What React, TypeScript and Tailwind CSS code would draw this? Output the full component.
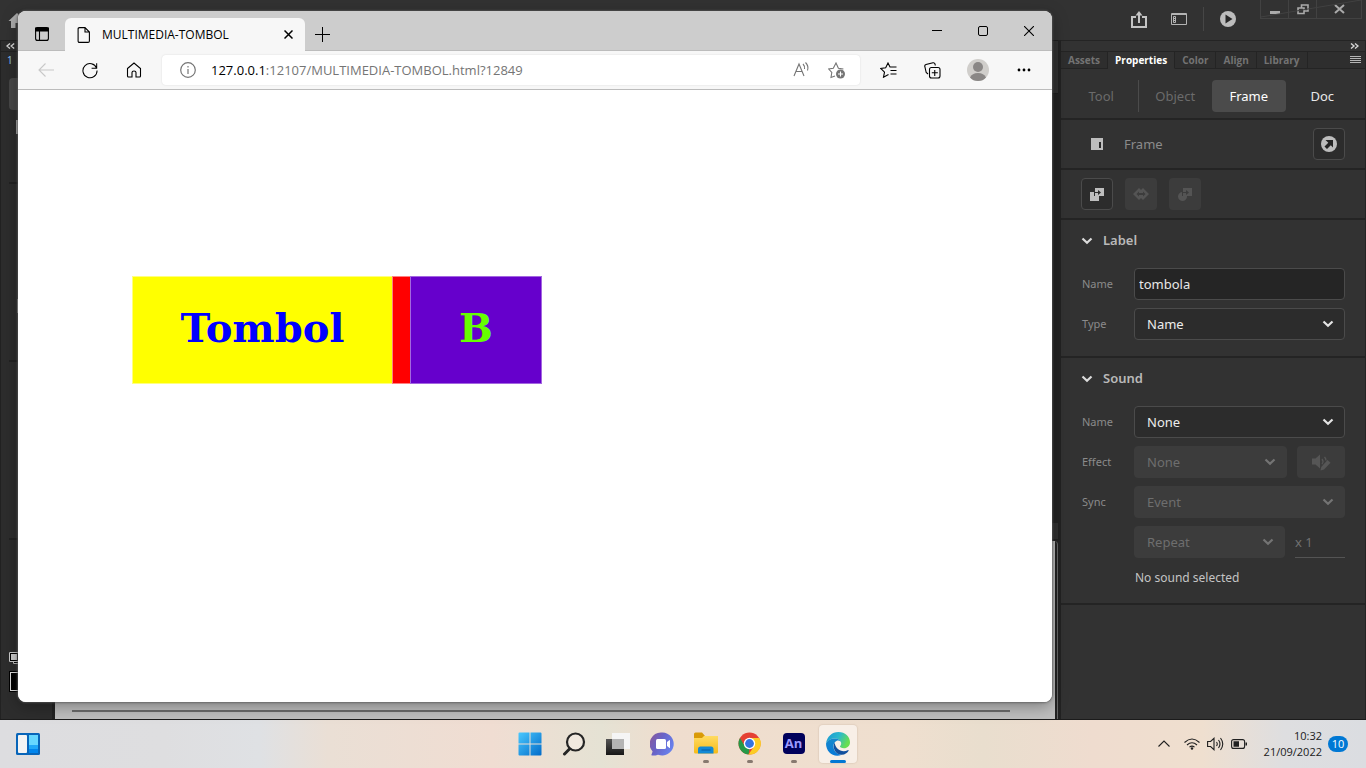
import React, { useState } from "react";

type IconProps = { className?: string };

function Chevron({ className = "" }: IconProps) {
  return (
    <svg className={className} width="12" height="8" viewBox="0 0 12 8" fill="none" stroke="currentColor" strokeWidth="2.2" aria-hidden="true">
      <path d="M1.5 1.5 6 5.8l4.5-4.3" />
    </svg>
  );
}

function HomeSolid() {
  return (
    <svg width="18" height="17" viewBox="0 0 18 17" fill="#adadad" aria-hidden="true">
      <path d="M9 1 0.5 9H3v7h4.500v-5h3v5H15V9h2.500L14 5.600V2h-2v1.800z" />
    </svg>
  );
}

function DoubleChevron({ flip = false }: { flip?: boolean }) {
  return (
    <svg width="9" height="6" viewBox="0 0 9 6" fill="none" stroke="#d6d6d6" strokeWidth="1.400" aria-hidden="true">
      {flip ? <path d="M4 .5 1 3l3 2.500M8.200.5l-3 2.500 3 2.500" /> : <path d="M1 .5 4 3 1 5.500M5 .5 8 3 5 5.500" />}
    </svg>
  );
}

function AppHeader() {
  return (
    <header className="flex h-10 shrink-0 items-center bg-[#323232] pl-2">
      <a href="#home" aria-label="Home"><HomeSolid /></a>
      <div className="ml-auto flex h-full items-center pb-0.5">
        <button aria-label="Share" className="mr-6 h-4 w-4">
          <svg width="16" height="17" viewBox="0 0 16 17" fill="none" stroke="#c4c4c4" strokeWidth="2" aria-hidden="true">
            <path d="M5 6H1v10h14V6h-4M8 12V2" />
            <path d="M4.500 4.500 8 0l3.500 4.500z" fill="#c4c4c4" stroke="none" />
          </svg>
        </button>
        <button aria-label="Workspace" className="mr-4 h-4 w-4">
          <svg width="16" height="16" viewBox="0 0 16 16" fill="none" stroke="#b4b4b4" aria-hidden="true">
            <path d="M.5 2.500h15v11H.5zM.5 3.500h15" />
            <path d="M2.500 5.500h2v6h-2zM2.500 7.500h2M2.500 9.500h2" />
          </svg>
        </button>
        <span className="h-6 w-px self-center bg-[#464646]" />
        <button aria-label="Test movie" className="mr-6 ml-4 h-4 w-4">
          <svg width="16" height="16" viewBox="0 0 16 16" aria-hidden="true">
            <circle cx="8" cy="8" r="8" fill="#bdbdbd" />
            <path d="M5.500 3.500v9L12.500 8z" fill="#282828" />
          </svg>
        </button>
        <div className="relative mr-1 flex h-[19px] self-start border border-t-0 border-[#424242] text-[#aaa]">
          <button aria-label="Minimize" className="flex w-7 justify-center border-r border-[#424242] pt-[11px]">
            <span className="h-[3px] w-2.5 bg-[#aaa]" />
          </button>
          <button aria-label="Restore" className="flex w-7 justify-center border-r border-[#424242] pt-1">
            <svg width="12" height="11" viewBox="0 0 12 11" fill="none" stroke="currentColor" strokeWidth="1.600" aria-hidden="true">
              <path d="M1 4h6v5.500H1zM4.500 4V1H11v6H7" />
            </svg>
          </button>
          <button aria-label="Close" className="flex w-11 justify-center pt-1">
            <svg width="11" height="10" viewBox="0 0 11 10" fill="none" stroke="currentColor" strokeWidth="2" aria-hidden="true">
              <path d="m1 1 9 8m0-8L1 9" />
            </svg>
          </button>
          <svg className="pointer-events-none absolute inset-0 h-full w-full" viewBox="0 0 101 18" preserveAspectRatio="none" aria-hidden="true">
            <path d="M0 17 101 0" stroke="#424242" />
          </svg>
        </div>
      </div>
    </header>
  );
}

function ToolRail() {
  return (
    <aside className="flex w-[52px] shrink-0 flex-col border-l border-[#222] bg-[#2d2d2d]">
      <div className="flex h-3 items-center border-y border-[#222] pl-[5px]"><DoubleChevron flip /></div>
      <div className="h-4 pl-1.5 font-['Noto_Sans'] text-[10px] leading-4 text-[#8cc4f5]">1</div>
      <div className="mt-2.5 ml-2 h-8 w-9 rounded-sm bg-[#484848]" />
      <div className="mt-2.5 ml-[15px] h-3.5 w-4 bg-[#aaa]" />
      <div className="mt-12 ml-2 h-0.5 w-9 bg-[#222]" />
      <div className="mt-[115px] ml-4 h-3.5 w-4 bg-[#909090]" />
      <div className="mt-[47px] ml-2 h-0.5 w-9 bg-[#222]" />
      <div className="mt-44 ml-2 h-0.5 w-9 bg-[#222]" />
      <svg className="mt-28 ml-2" width="18" height="13" viewBox="0 0 18 13" aria-hidden="true">
        <path d="M4.500 4.500h9v7h-9z" fill="#000" stroke="#bbb" />
        <path d="M1 1h8v8H1z" fill="#ccc" stroke="#000" strokeWidth="2" />
        <path d="M.5.500h9v9h-9z" fill="none" stroke="#ccc" />
      </svg>
      <div className="mt-1.5 ml-2 h-[21px] w-8 border border-black bg-[#ddd] p-px"><div className="h-full bg-black" /></div>
    </aside>
  );
}

function StageArea() {
  return (
    <section className="flex min-w-0 flex-1 flex-col bg-[#222] pr-[3px] pl-[3px]">
      <div className="h-[54px] border-y border-[#1d1d1d] bg-[#303030]" />
      <div className="flex-1" />
      <div className="flex h-4 items-center justify-end bg-[#303030] pr-1.5"><span className="h-2 w-px bg-[#888]" /></div>
      <div className="mt-0.5 flex h-[178px] items-end rounded-tr-sm border-r border-[#666]">
        <div className="mr-0.5 flex h-full flex-1 items-end bg-[#bebebe] pr-[45px] pb-[7px] pl-[17px]">
          <div className="h-0.5 w-full bg-[#6a6a6a]" />
        </div>
      </div>
    </section>
  );
}

function PanelSelect({ id, value, options, disabled = false, className = "" }: { id: string; value: string; options: string[]; disabled?: boolean; className?: string }) {
  return (
    <div className={`relative ${className}`}>
      <select
        id={id}
        defaultValue={value}
        disabled={disabled}
        aria-label={id}
        className="block h-8 w-full appearance-none rounded border border-[#4b4b4b] bg-[#2c2c2c] px-3 pt-0.5 text-[13px] text-[#ececec] opacity-100 disabled:border-[#3c3c3c] disabled:bg-[#3c3c3c] disabled:text-[#6e6e6e]"
      >
        {options.map((o) => <option key={o}>{o}</option>)}
      </select>
      <Chevron className={`pointer-events-none absolute top-3 right-[11px] ${disabled ? "text-[#747474]" : "text-[#e4e4e4]"}`} />
    </div>
  );
}

function SectionTitle({ children }: { children: React.ReactNode }) {
  return (
    <h2>
      <button className="flex h-5 items-center gap-2.5 text-[13px] font-semibold text-[#b9b9b9]">
        <Chevron className="text-[#dcdcdc]" />
        {children}
      </button>
    </h2>
  );
}

const labelClass = "w-[53px] shrink-0 pl-px text-[11px] text-[#8b8b8b]";

function PropertiesPanel() {
  const [name, setName] = useState("tombola");
  const tabs = ["Assets", "Properties", "Color", "Align", "Library"];
  const modes = ["Tool", "Object", "Frame", "Doc"];
  return (
    <aside className="flex w-[305px] shrink-0 flex-col border-r border-[#242424] bg-[#323232] font-['Noto_Sans',sans-serif]">
      <div className="flex h-3 items-center justify-end border-y border-[#242424] pr-1.5"><DoubleChevron /></div>
      <div className="flex h-[17px] font-['Open_Sans',sans-serif] text-[10px] font-bold" role="tablist">
        {tabs.map((t) => (
          <button
            key={t}
            role="tab"
            aria-selected={t === "Properties"}
            className="border-r border-b border-[#242424] bg-[#2e2e2e] px-[7px] leading-4 text-[#737373] aria-selected:border-b-[#323232] aria-selected:bg-[#323232] aria-selected:text-white"
          >
            {t}
          </button>
        ))}
        <div className="flex flex-1 items-center justify-end border-b border-[#242424] bg-[#2e2e2e] pr-1">
          <button aria-label="Panel menu">
            <svg width="11" height="8" viewBox="0 0 11 8" stroke="#b4b4b4" aria-hidden="true"><path d="M0 .5h11M0 2.500h11M0 4.500h11M0 6.500h11" /></svg>
          </button>
        </div>
      </div>
      <div className="flex h-[51px] items-center border-b-2 border-[#242424] pt-1 pr-1.5 pl-1">
        <div className="grid flex-1 grid-cols-4 text-[13px]">
          {modes.map((m) => (
            <button
              key={m}
              className={
                m === "Frame"
                  ? "h-8 rounded bg-[#4b4b4b] pt-0.5 text-white"
                  : m === "Doc"
                    ? "h-8 pt-0.5 text-[#e8e8e8]"
                    : m === "Tool"
                      ? "h-8 border-r border-[#4b4b4b] pt-0.5 text-[#6b6b6b]"
                      : "h-8 pt-0.5 text-[#6b6b6b]"
              }
            >
              {m}
            </button>
          ))}
        </div>
      </div>
      <div className="flex h-[50px] items-center border-b-2 border-[#242424] pr-5 pl-[30px]">
        <svg width="12" height="12" viewBox="0 0 12 12" aria-hidden="true"><path d="M0 0h12v12H0z" fill="#bdbdbd" /><path d="M8 4h2v6H8z" fill="#282828" /></svg>
        <span className="ml-[21px] pt-0.5 text-[13px] text-[#8b8b8b]">Frame</span>
        <button aria-label="Publish" className="ml-auto flex h-8 w-8 items-center justify-center rounded border border-[#4b4b4b] bg-[#2c2c2c]">
          <svg width="16" height="16" viewBox="0 0 16 16" aria-hidden="true">
            <circle cx="8" cy="8" r="8" fill="#bdbdbd" />
            <path d="M4.500 4h7.500v7.500L9.800 9.300l-3.800 3.700L3.500 10.500l3.800-3.800z" fill="#242424" />
          </svg>
        </button>
      </div>
      <div className="flex h-[50px] items-center gap-3 border-b-2 border-[#242424] px-5">
        <button aria-label="Convert to keyframes" className="flex h-8 w-8 items-center justify-center rounded border border-[#4b4b4b] bg-[#2c2c2c]">
          <svg width="14" height="13" viewBox="0 0 14 13" aria-hidden="true">
            <path d="M0 4h4v4h5v5H0zM5 0h9v8H5V5h3v2l3-2.500L8 2v2H5z" fill="#bdbdbd" />
          </svg>
        </button>
        <button disabled aria-label="Create tween" className="flex h-8 w-8 items-center justify-center rounded bg-[#3c3c3c]">
          <svg width="16" height="12" viewBox="0 0 16 12" aria-hidden="true">
            <path d="m0 6 6-6 2 2 2-2 6 6-6 6-2-2-2 2z" fill="#545454" /><path d="M3.500 6 6 3.500V5h4V3.500L12.500 6 10 8.500V7H6v1.500z" fill="#3c3c3c" />
          </svg>
        </button>
        <button disabled aria-label="Convert to blank keyframes" className="flex h-8 w-8 items-center justify-center rounded bg-[#3c3c3c]">
          <svg width="14" height="13" viewBox="0 0 14 13" aria-hidden="true">
            <path d="M4 4v4h5a4.500 4.500 0 1 1-5-4M5 0h9v8H5V5h3v2l3-2.500L8 2v2H5z" fill="#545454" />
          </svg>
        </button>
      </div>
      <section className="flex flex-col border-b-2 border-[#242424] pt-[11px] pr-5 pb-4 pl-5">
        <SectionTitle>Label</SectionTitle>
        <div className="mt-[17px] flex h-8 items-center">
          <label htmlFor="label-name" className={labelClass}>Name</label>
          <input id="label-name" value={name} onChange={(e) => setName(e.target.value)} className="h-8 w-0 flex-1 rounded border border-[#4b4b4b] bg-[#252525] px-1 text-[13px] text-[#e8e8e8]" />
        </div>
        <div className="mt-2 flex h-8 items-center">
          <label htmlFor="label-type" className={labelClass}>Type</label>
          <PanelSelect id="label-type" value="Name" options={["Name", "Comment", "Anchor"]} className="flex-1" />
        </div>
      </section>
      <section className="flex flex-col border-b-2 border-[#242424] pt-[11px] pr-5 pb-4 pl-5">
        <SectionTitle>Sound</SectionTitle>
        <div className="mt-[17px] flex h-8 items-center">
          <label htmlFor="sound-name" className={labelClass}>Name</label>
          <PanelSelect id="sound-name" value="None" options={["None"]} className="flex-1" />
        </div>
        <div className="mt-2 flex h-8 items-center">
          <label htmlFor="sound-effect" className={labelClass}>Effect</label>
          <PanelSelect id="sound-effect" value="None" options={["None"]} disabled className="flex-1" />
          <button disabled aria-label="Edit sound envelope" className="ml-2.5 flex h-8 w-12 items-center justify-center rounded bg-[#3c3c3c]">
            <svg width="19" height="17" viewBox="0 0 19 17" fill="#565656" aria-hidden="true">
              <path d="M0 4.500h3.500L8 .5v14l-4.500-4H0z" />
              <path d="M10 5q2 2.500 0 5M12.500 3q1.500 1.500 1.500 3.500" fill="none" stroke="#565656" strokeWidth="1.300" />
              <path d="m8.500 16.500.8-3.500L15.500 6l3 2.800-6.500 6.700z" />
            </svg>
          </button>
        </div>
        <div className="mt-2 flex h-8 items-center">
          <label htmlFor="sound-sync" className={labelClass}>Sync</label>
          <PanelSelect id="sound-sync" value="Event" options={["Event"]} disabled className="flex-1" />
        </div>
        <div className="mt-2 flex h-8 items-center pl-[53px]">
          <PanelSelect id="sound-repeat" value="Repeat" options={["Repeat", "Loop"]} disabled className="flex-1" />
          <input disabled aria-label="Repeat count" defaultValue="x 1" className="ml-2.5 h-8 w-[50px] border-b border-[#545454] text-[13px] text-[#707070]" />
        </div>
        <p className="mt-2.5 pl-[54px] text-[12px] leading-[19px] text-[#c4c4c4]">No sound selected</p>
      </section>
    </aside>
  );
}

const stroke = { fill: "none", stroke: "currentColor", strokeWidth: 1.1 } as const;

function BrowserWindow() {
  const [url, setUrl] = useState("127.0.0.1:12107/MULTIMEDIA-TOMBOL.html?12849");
  const [host, rest] = [url.split(":")[0], url.slice(url.split(":")[0].length)];
  return (
    <section className="absolute top-[11px] right-[314px] bottom-[17px] left-[18px] flex flex-col overflow-hidden rounded-lg bg-white font-['Open_Sans',sans-serif] text-black shadow-[0_0_2px_1px_rgba(90,90,90,0.7),0_4px_16px_rgba(0,0,0,0.35)]">
      <div className="flex h-10 shrink-0 items-end border-b border-[#bcbcbc] bg-[#cdcdcd]">
        <button aria-label="Tab actions" className="flex h-8 w-[47px] items-center justify-center">
          <svg width="14" height="14" viewBox="0 0 14 14" {...stroke} aria-hidden="true">
            <rect x=".6" y=".6" width="12.800" height="12.800" rx="2" /><path d="M.6 1h12.800v3H.6z" fill="currentColor" /><path d="M4.500 4v9" />
          </svg>
        </button>
        <div className="-mb-px flex h-[33px] w-60 items-center rounded-t-md bg-[#f7f7f7] px-3">
          <svg width="14" height="16" viewBox="0 0 14 16" {...stroke} aria-hidden="true"><path d="M2.500.6H8L12.400 5v9q0 1.400-1.400 1.400H2.500q-1.400 0-1.400-1.400V2Q1.100.6 2.500.6zM8 .6V5h4.400" /></svg>
          <span className="ml-[11px] text-[12px] whitespace-nowrap">MULTIMEDIA-TOMBOL</span>
          <button aria-label="Close tab" className="ml-auto">
            <svg width="9" height="9" viewBox="0 0 9 9" fill="none" stroke="currentColor" strokeWidth="1.500" aria-hidden="true"><path d="m.5.500 8 8m0-8-8 8" /></svg>
          </button>
        </div>
        <button aria-label="New tab" className="flex h-8 w-[35px] items-center justify-center">
          <svg width="15" height="15" viewBox="0 0 15 15" fill="none" stroke="currentColor" aria-hidden="true"><path d="M7.500 0v15M0 7.500h15" /></svg>
        </button>
        <div className="ml-auto flex h-full">
          <button aria-label="Minimize window" className="flex w-[46px] items-center justify-center"><span className="h-px w-2.5 bg-black" /></button>
          <button aria-label="Maximize window" className="flex w-[46px] items-center justify-center"><svg width="10" height="10" viewBox="0 0 10 10" fill="none" stroke="currentColor" aria-hidden="true"><rect x=".5" y=".5" width="9" height="9" rx="1.500" /></svg></button>
          <button aria-label="Close window" className="flex w-[46px] items-center justify-center"><svg width="10" height="10" viewBox="0 0 10 10" fill="none" stroke="currentColor" strokeWidth="1.100" aria-hidden="true"><path d="m0 0 10 10M10 0 0 10" /></svg></button>
        </div>
      </div>
      <div className="flex h-[39px] shrink-0 items-center border-b border-[#bcbcbc] bg-[#f7f7f7]">
        <button disabled aria-label="Back" className="ml-5 flex w-4 justify-center text-[#c8c8c8]">
          <svg width="16" height="14" viewBox="0 0 16 14" {...stroke} aria-hidden="true"><path d="M16 7H1M7.500.5 1 7l6.500 6.500" /></svg>
        </button>
        <button aria-label="Refresh" className="ml-7 flex w-4 justify-center">
          <svg width="17" height="17" viewBox="0 0 17 17" {...stroke} aria-hidden="true"><path d="M15.500 6A7.500 7.500 0 1 0 16 8.500M15.600.8v5.400h-5.400" /></svg>
        </button>
        <button aria-label="Home page" className="ml-7 flex w-4 justify-center">
          <svg width="16" height="16" viewBox="0 0 16 16" {...stroke} aria-hidden="true"><path d="M1.500 6.500 8 1l6.500 5.500V14q0 1-1 1H10v-4.500Q10 9 8 9t-2 1.500V15H2.500q-1 0-1-1z" /></svg>
        </button>
        <div className="ml-5 flex h-[30px] flex-1 items-center rounded bg-white pr-3.5 pl-[18px] shadow-[0_0_2px_rgba(0,0,0,0.12)]">
          <svg width="16" height="16" viewBox="0 0 16 16" fill="none" stroke="#757575" strokeWidth="1.200" aria-hidden="true"><circle cx="8" cy="8" r="7.300" /><path d="M8 7v5M8 4v1.500" /></svg>
          <div className="relative ml-[15px] h-6 flex-1 text-[13px] leading-6">
            <div className="pointer-events-none absolute inset-0 whitespace-nowrap" aria-hidden="true">{host}<span className="text-[#757575]">{rest}</span></div>
            <input aria-label="Address" value={url} onChange={(e) => setUrl(e.target.value)} className="h-6 w-full bg-transparent text-transparent caret-black outline-none" />
          </div>
          <button aria-label="Read aloud" className="text-[#757575]">
            <svg width="17" height="16" viewBox="0 0 17 16" {...stroke} aria-hidden="true"><path d="m1 14 5-12 5 12M3 9.500h6M10 2q2 2 1.500 5M12.500.5q3.500 3.500 2 8" /></svg>
          </button>
          <button aria-label="Add to favorites" className="ml-[18px] text-[#757575]">
            <svg width="18" height="17" viewBox="0 0 18 17" {...stroke} aria-hidden="true"><path d="m7 14-4 1.500.8-5L.7 7l4.600-.7L8 1l2.400 5.300 5 .7" /><circle cx="12.500" cy="12" r="4.500" fill="currentColor" stroke="none" /><path d="M12.500 9.500v5M10 12h5" stroke="#fff" /></svg>
          </button>
        </div>
        <button aria-label="Favorites" className="ml-5">
          <svg width="17" height="16" viewBox="0 0 17 16" {...stroke} aria-hidden="true"><path d="M8.500 12.500 3.500 15.200l1-5L.7 6.500l5-.7L8 1l2 4h6.500M10.500 8.500h6M10.500 12h6" /></svg>
        </button>
        <button aria-label="Collections" className="ml-[27px]">
          <svg width="17" height="17" viewBox="0 0 17 17" {...stroke} aria-hidden="true"><path d="M4 12 2.200 10.500.8 4.500Q.4 3 2 2.500l7-1.700q1.500-.3 2 1.200l.3 1.500" /><rect x="5.500" y="5.500" width="10.500" height="10.500" rx="2" /><path d="M10.750 8v6M7.800 10.800h6" /></svg>
        </button>
        <button aria-label="Profile" className="ml-[26px]">
          <svg width="22" height="22" viewBox="0 0 22 22" aria-hidden="true"><circle cx="11" cy="11" r="11" fill="#d0cecb" /><circle cx="11" cy="8" r="5" fill="#8a8786" /><path d="M3 18.500Q5 14 11 14t8 4.500Q16 22 11 22t-8-3.500" fill="#8a8786" /></svg>
        </button>
        <button aria-label="Settings and more" className="mr-[21px] ml-7">
          <svg width="14" height="4" viewBox="0 0 14 4" aria-hidden="true"><circle cx="2" cy="2" r="1.400" /><circle cx="7" cy="2" r="1.400" /><circle cx="12" cy="2" r="1.400" /></svg>
        </button>
      </div>
      <main className="flex flex-1 items-start bg-white pt-[186px] pl-[114px] font-['DejaVu_Serif',serif] text-[40px] font-bold">
        <button className="h-[108px] w-[260px] border border-r-0 border-[#ffff80] bg-[#ffff00] pb-1 text-[#0000ff]">Tombol</button>
        <div className="h-[108px] w-[18px] border-y border-l border-[#ff8080] bg-[#ff0000]" />
        <button className="h-[108px] w-[132px] border border-[#a366e0] bg-[#6600cc] pb-1 text-[#66ff00]">B</button>
      </main>
    </section>
  );
}

function TaskButton({ label, running = false, active = false, children }: { label: string; running?: boolean; active?: boolean; children: React.ReactNode }) {
  return (
    <button aria-label={label} className="flex w-11 justify-center">
      <span className={`relative flex h-[38px] w-[38px] items-center justify-center rounded ${active ? "bg-[#f8efe7] shadow-[0_0_1px_1px_rgba(190,170,150,0.25)]" : ""}`}>
        {children}
        {running && <span className="absolute bottom-0 h-[3px] w-1.5 rounded-full bg-[#87796f]" />}
        {active && <span className="absolute bottom-0 h-[3px] w-4 rounded-full bg-[#0078d4]" />}
      </span>
    </button>
  );
}

function Taskbar() {
  return (
    <footer className="grid h-12 shrink-0 grid-cols-[1fr_auto_1fr] items-center bg-[linear-gradient(90deg,#dddde0_0%,#dedee0_12%,#dfe1e4_19%,#eadfd5_24%,#f0ddd2_36%,#e5e2d4_44%,#efddce_49%,#efdfcf_66%,#e9dece_72%,#efdccf_80%,#efdfcf_88%,#dedee0_94%,#dbdde1_100%)] pb-px font-['Open_Sans',sans-serif] text-[#202020]">
      <div className="pl-4">
        <button aria-label="Widgets" className="block">
          <svg width="24" height="22" viewBox="0 0 24 22" aria-hidden="true">
            <rect width="24" height="22" rx="1.500" fill="#0865b9" /><rect x="2" y="2" width="9" height="18" rx="1" fill="#f4f4f4" /><path d="M13 2h9v10h-9z" fill="#66d7ff" /><path d="M13 12h9v4h-9z" fill="#20a8f8" /><path d="M13 16h9v4h-9z" fill="#0085ed" />
          </svg>
        </button>
      </div>
      <div className="flex pl-px">
        <TaskButton label="Start">
          <svg width="24" height="24" viewBox="0 0 24 24" aria-hidden="true">
            <defs><linearGradient id="win" gradientUnits="userSpaceOnUse" x1="0" y1="0" x2="24" y2="24"><stop stopColor="#4bcaff" /><stop offset="1" stopColor="#0069c8" /></linearGradient></defs>
            <path d="M1.500.5h10v11H.5v-10a1 1 0 0 1 1-1zM12.500.5h10a1 1 0 0 1 1 1v10h-11zM.5 12.500h11v11h-10a1 1 0 0 1-1-1zM12.500 12.500h11v10a1 1 0 0 1-1 1h-10z" fill="url(#win)" />
          </svg>
        </TaskButton>
        <TaskButton label="Search">
          <svg width="24" height="24" viewBox="0 0 24 24" fill="none" stroke="#252525" strokeLinecap="round" aria-hidden="true"><circle cx="13.500" cy="10" r="8.500" fill="#f1e9df" strokeWidth="2.200" /><path d="m7.500 17-5 5" strokeWidth="3" /></svg>
        </TaskButton>
        <TaskButton label="Task view">
          <svg width="24" height="24" viewBox="0 0 24 24" aria-hidden="true">
            <defs><linearGradient id="tv" x1="0" y1="0" x2="0" y2="1"><stop stopColor="#555" /><stop offset="1" stopColor="#161616" /></linearGradient></defs>
            <path d="M0 7h18v16H0z" fill="url(#tv)" /><path d="M6 1h18v16H6z" fill="#f5f5f5" /><path d="M6 7h12v10H6z" fill="#b4b4b4" />
          </svg>
        </TaskButton>
        <TaskButton label="Chat">
          <svg width="24" height="24" viewBox="0 0 24 24" aria-hidden="true">
            <defs><linearGradient id="chat" x1="0" y1="0" x2="1" y2=".5"><stop stopColor="#8b5798" /><stop offset=".5" stopColor="#6963c7" /><stop offset="1" stopColor="#6880ec" /></linearGradient></defs>
            <path d="M12.500.5A11.500 11.500 0 1 1 8 22.700q-3 1.100-6 .8-1-.2-.4-1.200l1-2.800A11.500 11.500 0 0 1 12.500.5" fill="url(#chat)" /><rect x="6" y="7" width="10" height="10" rx="1.500" fill="#fff" /><path d="m17 10 2.500-2q.5 0 .5.500v7q0 .5-.5.500L17 14z" fill="#fff" />
          </svg>
        </TaskButton>
        <TaskButton label="File Explorer" running>
          <svg width="24" height="23" viewBox="0 0 24 23" aria-hidden="true">
            <defs><linearGradient id="folder" x1="0" y1="0" x2="0" y2="1"><stop stopColor="#ffdb62" /><stop offset="1" stopColor="#f6ba18" /></linearGradient></defs>
            <path d="M0 2q0-1.500 1.500-1.500H8L11 4v4H0z" fill="#d99a08" /><path d="M0 6h8l2-2h14v16q0 1.500-1.500 1.500h-21Q0 21.500 0 20z" fill="url(#folder)" /><path d="M4 21.500V17q0-2.500 2.500-2.500h10.500q2.500 0 2.500 2.500v4.500z" fill="#1289d6" /><path d="M7.500 18h9" stroke="#075aa2" />
          </svg>
        </TaskButton>
        <TaskButton label="Chrome" running>
          <svg width="23" height="23" viewBox="0 0 23 23" aria-hidden="true">
            <circle cx="11.500" cy="11.500" r="11" fill="#e54133" /><path d="M2 6 7 14.500l4.500 2.500L10.500 22.500A11 11 0 0 1 2 6" fill="#269947" /><path d="M11.500 6h9.800a11 11 0 0 1-10.800 16.500l5.800-8.500z" fill="#fccc25" /><circle cx="11.500" cy="11.500" r="5.700" fill="#fff" /><circle cx="11.500" cy="11.500" r="4.400" fill="#3474e0" />
          </svg>
        </TaskButton>
        <TaskButton label="Adobe Animate" running>
          <span className="flex h-[21px] w-[22px] items-center justify-center rounded bg-[#00005b] text-[13px] font-bold text-[#9b99ff]">An</span>
        </TaskButton>
        <TaskButton label="Microsoft Edge" active>
          <svg width="24" height="24" viewBox="0 0 24 24" aria-hidden="true">
            <defs><linearGradient id="edgeTop" x1="0" y1="0" x2="1" y2=".4"><stop stopColor="#1995d4" /><stop offset=".55" stopColor="#2bb9cc" /><stop offset="1" stopColor="#67de50" /></linearGradient><linearGradient id="edgeSide" x1="0" y1="0" x2="0" y2="1"><stop stopColor="#1689cc" /><stop offset="1" stopColor="#0879d8" /></linearGradient></defs>
            <path d="M0 11.500C1 4.500 6 0 12.500 0 19 0 24 4.800 24 10.200c0 3.600-2.700 6-6 6-2.800 0-4-1-4-1.700 0-.8 1.200-1.200 1.200-3.300 0-3-3.200-4.700-6.500-4.700C4.800 6.500 1.600 8.500 0 11.500" fill="url(#edgeTop)" />
            <path d="M0 11.500c1.600-3.300 5-5 8.700-5 3.500 0 6.500 1.900 6.500 4.700 0-1.700-1.500-2.600-3-2.600-2.500 0-4.700 2.500-4.700 5.700 0 4.700 3.500 8.500 8.300 8.500C7.500 26 0 20 0 11.500" fill="url(#edgeSide)" />
            <path d="M8.800 10.600c-3 4.300.3 12.500 7 12.200 3.300-.2 5.300-2 6.600-3.900.5-.8 0-1-.7-.7-5.300 2.800-12.700-.7-12.900-7.600" fill="#12509e" />
          </svg>
        </TaskButton>
      </div>
      <div className="flex items-center justify-end pr-[18px]">
        <button aria-label="Show hidden icons" className="mr-3.5"><svg width="12" height="7" viewBox="0 0 12 7" {...stroke} aria-hidden="true"><path d="m.5 6.500 5.500-5.500 5.500 5.500" /></svg></button>
        <button aria-label="Network, volume and battery" className="flex items-center gap-[7px]">
          <svg width="16" height="12" viewBox="0 0 16 12" {...stroke} aria-hidden="true"><path d="M.5 4.500Q8-2.500 15.500 4.500M3 7q5-4.500 10 0M5.500 9.200q2.500-2.300 5 0" /><circle cx="8" cy="10.500" r="1.200" fill="currentColor" stroke="none" /></svg>
          <svg width="17" height="14" viewBox="0 0 17 14" {...stroke} aria-hidden="true"><path d="M.6 4.500h3L7 1.300v11.400L3.600 9.500h-3zM9.500 5q1.500 2 0 4M11.500 3q3 4 0 8M13.500 1q4.500 6 0 12" /></svg>
          <svg width="17" height="10" viewBox="0 0 17 10" {...stroke} aria-hidden="true"><rect x=".6" y=".6" width="13" height="8.800" rx="2" /><path d="M2.500 2.300H8v5.400H2.500zM14.500 3.500h1.500v3h-1.500z" fill="currentColor" stroke="none" /></svg>
        </button>
        <div className="ml-4 text-right text-[11px] leading-4"><div>10:32</div><div>21/09/2022</div></div>
        <button aria-label="10 notifications" className="ml-1.5 h-4 w-5 rounded-full bg-[#0078d4] text-[11px] leading-4 text-white">10</button>
      </div>
    </footer>
  );
}

export default function App() {
  return (
    <div className="flex min-h-screen flex-col bg-[#252525]">
      <div className="relative flex flex-1 flex-col border-b border-[#1b1b1b]">
        <AppHeader />
        <div className="flex flex-1">
          <ToolRail />
          <StageArea />
          <PropertiesPanel />
        </div>
        <BrowserWindow />
      </div>
      <Taskbar />
    </div>
  );
}
